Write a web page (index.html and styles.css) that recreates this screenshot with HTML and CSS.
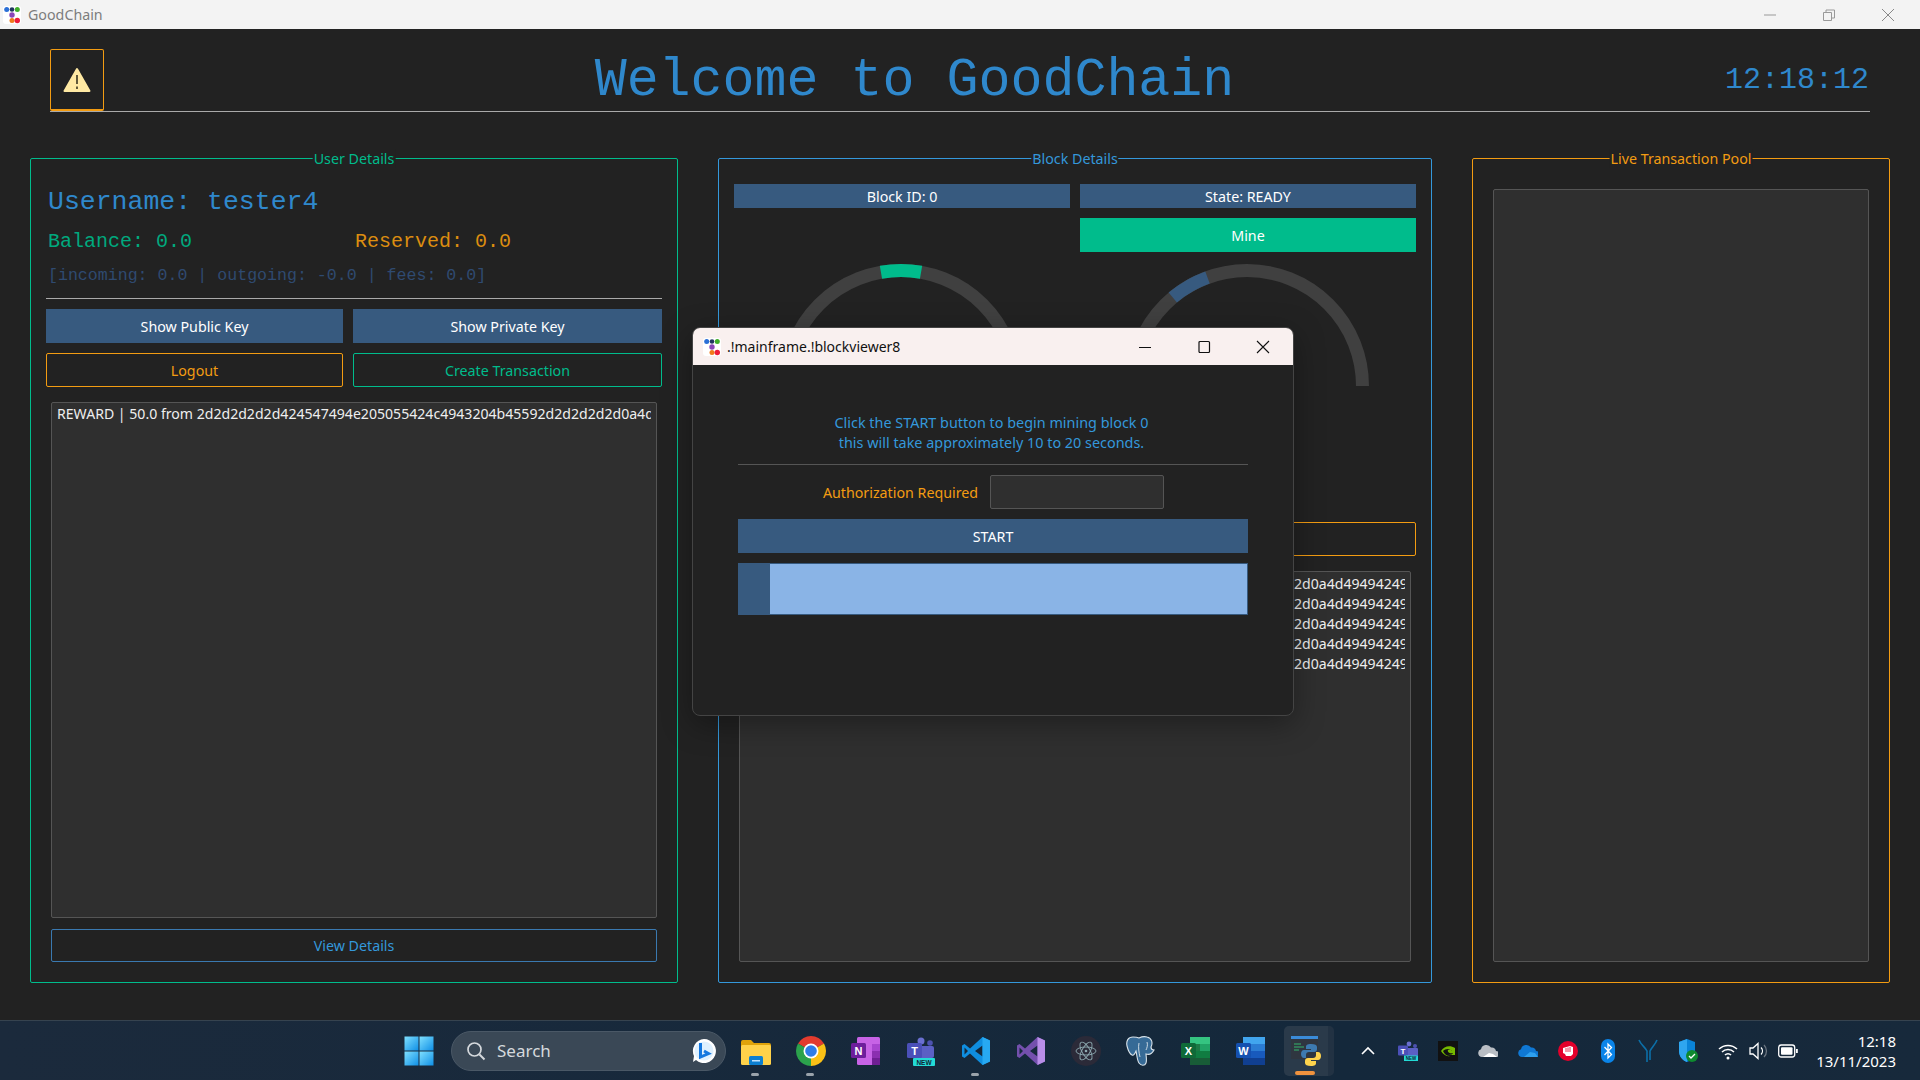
FILE: index.html
```html
<!DOCTYPE html>
<html lang="en">
<head>
  <meta charset="UTF-8" />
  <title>GoodChain</title>
  <link rel="stylesheet" href="styles.css">
</head>
<body>
  <div class="titlebar">
    <svg class="app-icon" viewBox="0 0 18 18"><rect width="18" height="18" rx="3" fill="#fff"/><circle cx="3.700" cy="3.500" r="2.500" fill="#2a6fd6"/><circle cx="9" cy="3.500" r="2.300" fill="#20355f"/><circle cx="14.300" cy="3.500" r="2.500" fill="#3fae2a"/><circle cx="9" cy="9" r="2.700" fill="#8a45b8"/><circle cx="9" cy="14.500" r="2.500" fill="#f07a1a"/><circle cx="14.300" cy="14.500" r="2.700" fill="#ee1c3a"/></svg>
    <span class="titlebar-name">GoodChain</span>
    <div class="win-controls">
      <svg viewBox="0 0 14 14"><path d="M1 7h12" stroke="#999" fill="none"/></svg>
      <svg viewBox="0 0 14 14"><path d="M1.500 4.500h8v8h-8z M4 4.500V2h8.500v8H9.500" stroke="#999" fill="none"/></svg>
      <svg viewBox="0 0 14 14"><path d="M1 1l12 12M13 1L1 13" stroke="#888" fill="none"/></svg>
    </div>
  </div>

  <div class="app">
    <header class="header">
      <div class="warn-box">
        <svg viewBox="0 0 28 26" width="28" height="26"><path d="M14 2L26.500 24H1.500z" fill="#ffe9a3" stroke="#ffe9a3" stroke-width="2" stroke-linejoin="round"/><path d="M14 8v9M14 19.500v2.500" stroke="#3a3520" stroke-width="1.600"/></svg>
      </div>
      <h1 class="main-title">Welcome to GoodChain</h1>
      <div class="clock">12:18:12</div>
    </header>

    <main class="panels">
      <section class="panel panel-user">
        <span class="panel-title green">User Details</span>
        <div class="username">Username: tester4</div>
        <div class="balances">
          <span class="balance">Balance: 0.0</span>
          <span class="reserved">Reserved: 0.0</span>
        </div>
        <div class="stats">[incoming: 0.0 | outgoing: -0.0 | fees: 0.0]</div>
        <hr class="rule">
        <div class="user-actions">
          <button class="btn btn-primary">Show Public Key</button>
          <button class="btn btn-primary">Show Private Key</button>
          <button class="btn btn-outline-orange">Logout</button>
          <button class="btn btn-outline-green">Create Transaction</button>
        </div>
        <div class="listbox user-list">
          <div class="list-row">REWARD | 50.0 from 2d2d2d2d2d424547494e205055424c4943204b45592d2d2d2d2d0a4d49494249</div>
        </div>
        <button class="btn btn-outline-blue view-details">View Details</button>
      </section>

      <section class="panel panel-block">
        <span class="panel-title blue">Block Details</span>
        <div class="block-grid">
          <div class="btn btn-primary bar">Block ID: 0</div>
          <div class="btn btn-primary bar">State: READY</div>
          <div></div>
          <button class="btn btn-green mine">Mine</button>
          <svg class="gauge" viewBox="0 0 336 250">
            <path d="M51.500 124A115.500 115.500 0 0 1 282.500 124" fill="none" stroke="#404040" stroke-width="13"/>
            <path d="M146.940 10.250A115.500 115.500 0 0 1 187.060 10.250" fill="none" stroke="#00bc8c" stroke-width="13"/>
          </svg>
          <svg class="gauge" viewBox="0 0 336 250">
            <path d="M51.500 124A115.500 115.500 0 0 1 282.500 124" fill="none" stroke="#404040" stroke-width="13"/>
            <path d="M92.800 35.500A115.500 115.500 0 0 1 127.500 15.500" fill="none" stroke="#375a7f" stroke-width="13"/>
          </svg>
          <button class="btn btn-outline-orange wide">View Block</button>
        </div>
        <div class="listbox block-list">
          <div class="list-row">2d0a4d49494249</div>
          <div class="list-row">2d0a4d49494249</div>
          <div class="list-row">2d0a4d49494249</div>
          <div class="list-row">2d0a4d49494249</div>
          <div class="list-row">2d0a4d49494249</div>
        </div>
      </section>

      <section class="panel panel-pool">
        <span class="panel-title orange">Live Transaction Pool</span>
        <div class="listbox pool-list"></div>
      </section>
    </main>

    <div class="dialog">
      <div class="dialog-bar">
        <svg class="app-icon" viewBox="0 0 18 18"><rect width="18" height="18" rx="3" fill="#fff"/><circle cx="3.700" cy="3.500" r="2.500" fill="#2a6fd6"/><circle cx="9" cy="3.500" r="2.300" fill="#20355f"/><circle cx="14.300" cy="3.500" r="2.500" fill="#3fae2a"/><circle cx="9" cy="9" r="2.700" fill="#8a45b8"/><circle cx="9" cy="14.500" r="2.500" fill="#f07a1a"/><circle cx="14.300" cy="14.500" r="2.700" fill="#ee1c3a"/></svg>
        <span class="dialog-name">.!mainframe.!blockviewer8</span>
        <div class="dialog-controls">
          <svg viewBox="0 0 14 14"><path d="M1 7.500h12" stroke="#111" stroke-width="1.200" fill="none"/></svg>
          <svg viewBox="0 0 14 14"><rect x="2" y="1.500" width="10.500" height="11" rx="1" stroke="#111" stroke-width="1.200" fill="none"/></svg>
          <svg viewBox="0 0 14 14"><path d="M1 1l12 12M13 1L1 13" stroke="#111" stroke-width="1.100" fill="none"/></svg>
        </div>
      </div>
      <div class="dialog-body">
        <p class="dialog-msg">Click the START button to begin mining block 0<br>this will take approximately 10 to 20 seconds.</p>
        <hr class="dialog-rule">
        <div class="auth-row">
          <label class="orange" for="auth">Authorization Required</label>
          <input id="auth" class="auth-input" type="password">
        </div>
        <button class="btn btn-primary start">START</button>
        <div class="progress"><div class="progress-fill" style="width: 6.200%"></div></div>
      </div>
    </div>
  </div>

  <footer class="taskbar">
    <svg class="start-icon" viewBox="0 0 30 30">
      <defs><linearGradient id="win" x1="0" y1="0" x2="1" y2="1"><stop offset="0" stop-color="#7fe0ff"/><stop offset="1" stop-color="#0f8fe6"/></linearGradient></defs>
      <rect x="0.500" y="0.500" width="14" height="14" fill="url(#win)"/><rect x="15.500" y="0.500" width="14" height="14" fill="url(#win)"/><rect x="0.500" y="15.500" width="14" height="14" fill="url(#win)"/><rect x="15.500" y="15.500" width="14" height="14" fill="url(#win)"/>
    </svg>
    <div class="search">
      <svg viewBox="0 0 20 20" width="20" height="20"><circle cx="8.500" cy="8.500" r="6.500" fill="none" stroke="#d5d9dd" stroke-width="1.700"/><path d="M13.500 13.500l5 5" stroke="#d5d9dd" stroke-width="1.900"/></svg>
      <span class="search-text">Search</span>
      <svg class="bing" viewBox="0 0 26 26" width="26" height="26"><path d="M13 1a12 12 0 1 1-8 21l-3 2 1-6A12 12 0 0 1 13 1z" fill="#fff"/><circle cx="13" cy="13" r="9.500" fill="#dff1ff"/><path d="M9.500 5v14l8-3.500-4.500-2.500" fill="none" stroke="#1478e0" stroke-width="3"/></svg>
    </div>

    <div class="apps">
      <div class="slot open">
        <svg viewBox="0 0 30 30"><path d="M0 6a2 2 0 0 1 2-2h8l3 3h15a2 2 0 0 1 2 2v5H0z" fill="#e0a30a"/><rect y="9" width="30" height="20" rx="1.500" fill="#ffd24a"/><rect x="8" y="20" width="14" height="9" rx="1.500" fill="#0c7fd0"/><rect x="11" y="24" width="8" height="1.500" fill="#bfe3ff"/></svg>
      </div>
      <div class="slot open">
        <svg viewBox="0 0 30 30"><path d="M15 15L2.010 7.500A15 15 0 0 1 27.990 7.500z" fill="#e33b2e"/><path d="M15 15L27.990 7.500A15 15 0 0 1 15 30z" fill="#fbc116"/><path d="M15 15L15 30A15 15 0 0 1 2.010 7.500z" fill="#2ba24c"/><circle cx="15" cy="15" r="7.500" fill="#fff"/><circle cx="15" cy="15" r="5.800" fill="#2f7de8"/></svg>
      </div>
      <div class="slot">
        <svg viewBox="0 0 30 30"><rect x="6" y="1" width="23" height="28" rx="1.500" fill="#c763e6"/><rect x="21" y="8" width="8" height="7" fill="#a845cf"/><rect x="21" y="15" width="8" height="7" fill="#8b2fb0"/><rect x="21" y="22" width="8" height="7" fill="#6f1f93"/><rect x="0" y="7" width="15" height="15" rx="1.500" fill="#6d1f9c"/><text x="7.500" y="18.500" class="icon-letter" font-size="11">N</text></svg>
      </div>
      <div class="slot">
        <svg viewBox="0 0 30 30"><circle cx="15" cy="5" r="3.500" fill="#6a6fd0"/><circle cx="24" cy="7" r="2.800" fill="#4d52b0"/><rect x="12" y="10" width="16" height="12" rx="2" fill="#5b60c4"/><rect x="1" y="7" width="15" height="15" rx="1.500" fill="#4b50b8"/><text x="8.500" y="18.500" class="icon-letter" font-size="11">T</text><rect x="7" y="22" width="22" height="8" rx="1" fill="#23dbd6"/><text x="18" y="28.500" class="icon-letter dark" font-size="6.500">NEW</text></svg>
      </div>
      <div class="slot open">
        <svg viewBox="0 0 30 30"><path fill-rule="evenodd" d="M21.500 1L29 4.600V25.400L21.500 29L9 17.500L3.500 22L1 20.500V9.500L3.500 8L9 12.500zM21.500 9.500L14 15L21.500 20.500zM3.500 11.500V18.500L7 15z" fill="#0f8ee0"/><path d="M21.500 1L29 4.600V25.400L21.500 29z" fill="#27a9f2"/></svg>
      </div>
      <div class="slot">
        <svg viewBox="0 0 30 30"><path fill-rule="evenodd" d="M21.500 1L29 4.600V25.400L21.500 29L9 17.500L3.500 22L1 20.500V9.500L3.500 8L9 12.500zM21.500 9.500L14 15L21.500 20.500zM3.500 11.500V18.500L7 15z" fill="#7450ad"/><path d="M21.500 1L29 4.600V25.400L21.500 29z" fill="#b98ee8"/></svg>
      </div>
      <div class="slot">
        <svg viewBox="0 0 30 30"><circle cx="15" cy="15" r="15" fill="#2b2a38"/><g fill="none" stroke="#8fabb2" stroke-width="0.900"><ellipse cx="15" cy="15" rx="10" ry="4"/><ellipse cx="15" cy="15" rx="10" ry="4" transform="rotate(60 15 15)"/><ellipse cx="15" cy="15" rx="10" ry="4" transform="rotate(120 15 15)"/></g><circle cx="15" cy="15" r="1.300" fill="#8fabb2"/></svg>
      </div>
      <div class="slot">
        <svg viewBox="0 0 30 30"><path d="M7 1C2 1 0 5 1 10c1 4 3 8 5 9 2 1 3-2 4-4 1 4 1 9 3 12 2 3 6 3 7 0 1-3 0-7 0-9 3 1 6 0 8-4-2 0-3-1-3-3 2-4 1-9-4-10-3-1-6 0-8 1-2-1-4-1-6-1z" fill="#366a96" stroke="#d9e3ea" stroke-width="1.100"/><path d="M13 7c-1 4 0 10 1 14M21 6c1 3 0 6-1 8" fill="none" stroke="#d9e3ea" stroke-width="0.900"/></svg>
      </div>
      <div class="slot">
        <svg viewBox="0 0 30 30"><rect x="9" y="1" width="20" height="28" rx="1.500" fill="#1d7a45"/><rect x="9" y="1" width="20" height="7" fill="#35c481"/><rect x="19" y="8" width="10" height="7" fill="#21a366"/><rect x="9" y="15" width="20" height="7" fill="#107c41"/><rect x="9" y="22" width="20" height="7" fill="#185c37"/><rect x="0" y="7" width="15" height="15" rx="1.500" fill="#0f6a38"/><text x="7.500" y="18.500" class="icon-letter" font-size="11">X</text></svg>
      </div>
      <div class="slot">
        <svg viewBox="0 0 30 30"><rect x="7" y="1" width="22" height="28" rx="1.500" fill="#185abd"/><rect x="7" y="1" width="22" height="7" fill="#41a5ee"/><rect x="7" y="8" width="22" height="7" fill="#2b7cd3"/><rect x="7" y="22" width="22" height="7" fill="#103f91"/><rect x="0" y="7" width="15" height="15" rx="1.500" fill="#1551b0"/><text x="7.500" y="18.500" class="icon-letter" font-size="11">W</text></svg>
      </div>
      <div class="slot active">
        <svg viewBox="0 0 30 30"><rect x="0" y="0" width="27" height="23" fill="#2f3640"/><rect x="0" y="0" width="27" height="3" fill="#3a8bd8"/><path d="M3 8h7M3 11h10M3 14h5" stroke="#35b56c" stroke-width="1"/><path d="M20 8c-4 0-5 1-5 3v2h5v1h-7c-2 0-3 2-3 4s1 4 3 4h2v-3c0-2 1-3 3-3h5c2 0 3-1 3-3v-2c0-2-2-3-6-3z" fill="#3d7ab0"/><path d="M20 30c4 0 5-1 5-3v-2h-5v-1h7c2 0 3-2 3-4s-1-4-3-4h-2v3c0 2-1 3-3 3h-5c-2 0-3 1-3 3v2c0 2 2 3 6 3z" fill="#ffd44d"/></svg>
      </div>
    </div>

    <div class="tray">
      <svg class="chevron" viewBox="0 0 14 14"><path d="M1 10l6-6 6 6" fill="none" stroke="#fff" stroke-width="1.600"/></svg>
      <svg viewBox="0 0 20 20"><circle cx="11" cy="3" r="2.400" fill="#6a6fd0"/><circle cx="17" cy="5" r="2" fill="#4d52b0"/><rect x="8" y="7" width="12" height="8" rx="1" fill="#5b60c4"/><rect x="0" y="4.500" width="10" height="10" rx="1" fill="#4b50b8"/><text x="5" y="12.500" class="icon-letter" font-size="8">T</text><rect x="6" y="14.500" width="14" height="5.500" fill="#23dbd6"/><text x="13" y="19" class="icon-letter dark" font-size="4.500">NEW</text></svg>
      <svg viewBox="0 0 20 20"><rect width="20" height="20" fill="#111"/><path d="M3 10c3-5 9-6 14-3v7h-7c3 0 5-1 5-2-3 1-6-1-5-3 2-1 3 0 4 1-2-3-7-2-9 0 1 3 4 5 7 5-4 1-7-2-9-5z" fill="#76b900"/></svg>
      <svg viewBox="0 0 20 20"><path d="M4 16a4 4 0 0 1-1-7.800 5.500 5.500 0 0 1 10-1.700A4.500 4.500 0 0 1 18 10a3 3 0 0 1 0 6z" fill="#b9bec4"/><path d="M5 16l6-4 4 1 4 3z" fill="#fff"/></svg>
      <svg viewBox="0 0 20 20"><path d="M4 16a4 4 0 0 1-1-7.800 5.500 5.500 0 0 1 10-1.700A4.500 4.500 0 0 1 18 10a3 3 0 0 1 0 6z" fill="#0f78d4"/><path d="M6 16l6-5 5 1 3 4z" fill="#2ea0ee"/></svg>
      <svg viewBox="0 0 20 20"><circle cx="10" cy="10" r="10" fill="#e4002b"/><path d="M5 7l7-2 3 1v7l-2 2H8l-1-2-2-1z" fill="#fff"/><path d="M8 7v4M10 6.500v4.500M12 6v5" stroke="#e4002b" stroke-width="0.800"/></svg>
      <svg viewBox="0 0 20 24" class="tall"><rect x="3" y="0" width="14" height="24" rx="7" fill="#0a84e8"/><path d="M6.500 8l7 7.500-3.500 3.500V5l3.500 3.500-7 7.500" fill="none" stroke="#fff" stroke-width="1.300"/></svg>
      <svg viewBox="0 0 20 24" class="tall"><path d="M1 1c2 5 6 7 8 11v11M19 1c-2 5-5 7-7 11v9" fill="none" stroke="#0c6fa8" stroke-width="1.600"/></svg>
      <svg viewBox="0 0 20 24" class="tall"><path d="M9 0l8 3v9c0 5-3 9-8 11-5-2-8-6-8-11V3z" fill="#0a84d8"/><path d="M9 0v23c-5-2-8-6-8-11V3z" fill="#2fa6ef"/><circle cx="14" cy="17" r="6" fill="#0e8a2f"/><path d="M11 17l2 2 4-4" fill="none" stroke="#fff" stroke-width="1.300"/></svg>
    </div>

    <div class="status">
      <svg viewBox="0 0 20 20"><g fill="none" stroke="#fff" stroke-width="1.500"><path d="M1 8a13 13 0 0 1 18 0"/><path d="M4 11a8.500 8.500 0 0 1 12 0"/><path d="M7 14a4 4 0 0 1 6 0"/></g><circle cx="10" cy="17" r="1.500" fill="#fff"/></svg>
      <svg viewBox="0 0 20 20"><path d="M2 7h3l5-4.500v15L5 13H2z" fill="none" stroke="#fff" stroke-width="1.300"/><path d="M13 6.500a5 5 0 0 1 0 7" fill="none" stroke="#fff" stroke-width="1.300"/><path d="M16 4a8.500 8.500 0 0 1 0 12" fill="none" stroke="#6b7580" stroke-width="1.300"/></svg>
      <svg viewBox="0 0 20 20"><rect x="0.700" y="4" width="16" height="12" rx="2.500" fill="none" stroke="#fff" stroke-width="1.300"/><rect x="3" y="6.200" width="11.500" height="7.600" rx="1" fill="#fff"/><rect x="18" y="8" width="1.800" height="4" fill="#fff"/></svg>
    </div>

    <div class="datetime">
      <div>12:18</div>
      <div>13/11/2023</div>
    </div>
  </footer>
</body>
</html>
```

FILE: styles.css
```css
* {
  box-sizing: border-box;
}

body {
  position: relative;
  margin: 0;
  width: 1920px;
  height: 1080px;
  overflow: hidden;
  background: #222;
  font-family: "Noto Sans", sans-serif;
  font-size: 14.25px;
  color: #fff;
}

.green { color: #00bc8c; }
.orange { color: #f39c12; }
.blue { color: #3498db; }

/* main window title bar */
.titlebar {
  height: 29px;
  background: #f3f3f3;
  display: flex;
  align-items: center;
  padding-left: 3px;
}

.app-icon {
  width: 18px;
  height: 18px;
  flex: none;
}

.titlebar-name {
  margin-left: 7px;
  color: #7d7d7d;
}

.win-controls {
  margin-left: auto;
  display: flex;
  gap: 45px;
  padding-right: 25px;
}

.win-controls svg {
  width: 14px;
  height: 14px;
}

.app {
  position: relative;
  height: 991px;
  padding-top: 20px;
}

.header {
  margin: 0 50px;
  height: 63px;
  display: flex;
  align-items: center;
  border-bottom: 1px solid #aaa;
}

.warn-box {
  width: 54px;
  height: 62px;
  border: 1px solid #f39c12;
  border-bottom-width: 2px;
  border-radius: 2px;
  display: flex;
  align-items: center;
  justify-content: center;
}

.main-title {
  flex: 1;
  margin: 0;
  padding-top: 2px;
  text-align: center;
  font-family: "Liberation Mono", monospace;
  font-weight: normal;
  font-size: 53.3px;
  color: #2f88cc;
}

.clock {
  width: 145px;
  font-family: "Liberation Mono", monospace;
  font-size: 30px;
  color: #2f88cc;
}

.panels {
  margin: 46px 30px 0;
  display: flex;
  gap: 40px;
  height: 825px;
}

.panel {
  position: relative;
  border: 1px solid;
  border-radius: 2px;
  display: flex;
  flex-direction: column;
}

.panel-title {
  position: absolute;
  top: -10px;
  left: 50%;
  transform: translateX(-50%);
  padding: 0 1px;
  background: #222;
  white-space: nowrap;
}

.panel-user {
  width: 648px;
  border-color: #00bc8c;
  padding: 28px 15px 20px;
}

.panel-block {
  width: 714px;
  border-color: #3498db;
  padding: 25px 15px 20px;
}

.panel-pool {
  width: 418px;
  border-color: #f39c12;
  padding: 30px 20px 20px;
}

.username {
  height: 30px;
  line-height: 30px;
  padding-left: 2px;
  font-family: "Liberation Mono", monospace;
  font-size: 26.5px;
  color: #2f88cc;
}

.balances {
  margin-top: 13px;
  padding-left: 2px;
  display: flex;
  height: 24px;
  line-height: 24px;
  font-family: "Liberation Mono", monospace;
  font-size: 20px;
}

.balance {
  width: 307px;
  color: #00a97e;
}

.reserved {
  color: #dc8d10;
}

.stats {
  margin-top: 12px;
  padding-left: 2px;
  height: 20px;
  line-height: 20px;
  font-family: "Liberation Mono", monospace;
  font-size: 16.6px;
  color: #2f4a70;
}

.rule {
  margin: 12px 0 0;
  border: 0;
  border-top: 1px solid #aaa;
}

.btn {
  font-family: inherit;
  font-size: 14.25px;
  border-radius: 0;
  border: 0;
  padding: 0;
  display: flex;
  align-items: center;
  justify-content: center;
  color: #fff;
  background: none;
}

.btn-primary { background: #375a7f; }
.btn-green { background: #00bc8c; }

.btn-outline-orange {
  border: 1px solid #f39c12;
  border-radius: 2px;
  color: #f39c12;
}

.btn-outline-green {
  border: 1px solid #00bc8c;
  border-radius: 2px;
  color: #00bc8c;
}

.btn-outline-blue {
  border: 1px solid #3a79b0;
  border-radius: 2px;
  color: #3498db;
}

.user-actions {
  margin-top: 10px;
  display: grid;
  grid-template-columns: 297px 309px;
  grid-auto-rows: 34px;
  gap: 10px;
}

.listbox {
  background: #2f2f2f;
  border: 1px solid #555;
  border-radius: 2px;
  padding: 1px 5px;
  color: #eee;
  font-size: 14.1px;
}

.list-row {
  height: 20px;
  line-height: 20px;
  white-space: nowrap;
  overflow: hidden;
}

.user-list {
  margin: 15px 5px 0;
  flex: 1;
}

.view-details {
  margin: 11px 5px 0;
  height: 33px;
  flex: none;
}

.block-grid {
  display: grid;
  grid-template-columns: 336px 336px;
  gap: 10px;
}

.bar { height: 24px; }
.mine { height: 34px; }

.gauge {
  width: 336px;
  height: 250px;
  display: block;
}

.wide {
  grid-column: 1 / 3;
  height: 34px;
}

.block-list {
  margin: 15px 5px 0;
  flex: 1;
  padding: 2px 5px 2px 554px;
}

.pool-list {
  flex: 1;
}

/* the mining popup sits on top of the main window */
.dialog {
  position: absolute;
  left: 692px;
  top: 298px;
  width: 602px;
  height: 389px;
  background: #222;
  border: 1px solid #444;
  border-radius: 8px;
  overflow: hidden;
  box-shadow: 0 8px 30px rgba(0, 0, 0, 0.35);
}

.dialog-bar {
  height: 37px;
  background: #f9f0ef;
  display: flex;
  align-items: center;
  padding-left: 10px;
  color: #111;
}

.dialog-name {
  margin-left: 6px;
  font-size: 14px;
}

.dialog-controls {
  margin-left: auto;
  display: flex;
  gap: 45px;
  padding-right: 23px;
}

.dialog-controls svg {
  width: 14px;
  height: 14px;
}

.dialog-body {
  padding: 48px 45px 0;
}

.dialog-msg {
  margin: 0;
  padding-right: 3px;
  text-align: center;
  font-size: 14.4px;
  line-height: 20px;
  color: #3498db;
}

.dialog-rule {
  margin: 11px 0 0;
  border: 0;
  border-top: 1px solid #555;
}

.auth-row {
  margin-top: 10px;
  height: 34px;
  display: flex;
  align-items: center;
  justify-content: center;
  gap: 12px;
  padding-left: 1px;
}

.auth-input {
  width: 174px;
  height: 34px;
  background: #2f2f2f;
  border: 1px solid #555;
  border-radius: 2px;
}

.start {
  margin-top: 10px;
  width: 100%;
  height: 34px;
}

.progress {
  margin-top: 10px;
  height: 52px;
  background: #8ab4e6;
  border: 1px solid #375a7f;
}

.progress-fill {
  height: 100%;
  background: #375a7f;
}

/* windows taskbar */
.taskbar {
  position: absolute;
  left: 0;
  top: 1020px;
  width: 1920px;
  height: 60px;
  background: linear-gradient(to right, #1b2a3c, #14283b 70%, #17293b);
  border-top: 1px solid #36434f;
  display: flex;
  align-items: center;
  padding-left: 404px;
}

.start-icon {
  flex: none;
  width: 30px;
  height: 30px;
}

.search {
  margin-left: 17px;
  width: 275px;
  height: 40px;
  background: #3a4856;
  border: 1px solid #4a5866;
  border-radius: 20px;
  display: flex;
  align-items: center;
  padding-left: 14px;
}

.search-text {
  margin-left: 11px;
  font-size: 17px;
  color: #d5d9dd;
}

.bing {
  margin-left: auto;
  margin-right: 8px;
}

.apps {
  margin-left: 2px;
  display: flex;
}

.slot {
  position: relative;
  width: 55px;
  height: 50px;
  display: flex;
  align-items: center;
  justify-content: center;
}

.slot svg {
  width: 30px;
  height: 30px;
}

.icon-letter {
  font-family: "Liberation Sans", sans-serif;
  font-weight: bold;
  fill: #fff;
  text-anchor: middle;
}

.icon-letter.dark {
  fill: #123;
}

.slot.open::after {
  content: "";
  position: absolute;
  left: 23px;
  bottom: 0;
  width: 8px;
  height: 3px;
  border-radius: 2px;
  background: #9aa3ab;
}

.slot.active::before {
  content: "";
  position: absolute;
  left: 6px;
  top: 0;
  width: 50px;
  height: 50px;
  border-radius: 5px;
  background: linear-gradient(to right, #2a3a4a 88%, #223243 88%);
}

.slot.active svg {
  position: relative;
}

.slot.active::after {
  content: "";
  position: absolute;
  left: 17px;
  bottom: 1px;
  width: 20px;
  height: 4px;
  border-radius: 2px;
  background: #f0923e;
}

.tray {
  margin-left: 15px;
  display: flex;
  align-items: center;
}

.tray svg {
  width: 20px;
  height: 20px;
  margin: 0 10px;
}

.tray svg.tall {
  height: 24px;
}

.tray svg.chevron {
  width: 14px;
  height: 14px;
  margin: 0 13px;
}

.status {
  margin-left: 5px;
  display: flex;
}

.status svg {
  width: 20px;
  height: 20px;
  margin: 0 5px;
}

.datetime {
  margin-left: auto;
  padding-right: 24px;
  text-align: right;
  font-size: 15px;
  line-height: 20px;
}
```
